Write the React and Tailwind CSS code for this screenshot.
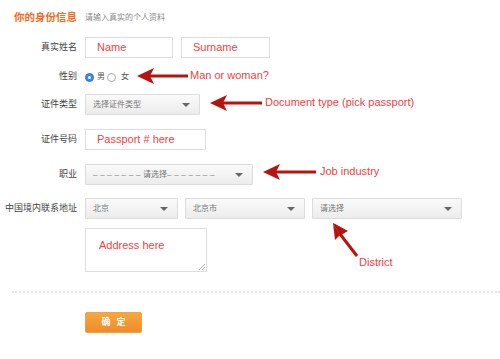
import React from "react";

const CJK = "font-['Liberation_Sans','Noto_Sans_CJK_SC',sans-serif]";
const ANN = "font-['Liberation_Sans',sans-serif] text-[11px] text-[#f24141] leading-none";

function Label({ children }) {
    return (
        <div className={`w-[77px] shrink-0 text-right text-[9px] text-[#444] ${CJK}`}>{children}</div>
    );
}

function Select({ text, className }) {
    return (
        <div className={`h-[21px] flex items-center justify-between pl-[7px] pr-[9px] border border-[#dcdcdc] bg-[linear-gradient(#fafafa,#ececec)] rounded-[1px] overflow-hidden ${className}`}>
            <span className={`text-[8px] text-[#777] whitespace-nowrap ${CJK}`}>{text}</span>
            <svg className="shrink-0" width="8" height="4" viewBox="0 0 8 4"><path d="M0 0h8L4 4z" fill="#666" /></svg>
        </div>
    );
}

function Input({ text, className }) {
    return (
        <div className={`h-[21px] flex items-center pl-[11px] border border-[#dedede] bg-white ${className}`}>
            <span className={ANN}>{text}</span>
        </div>
    );
}

function Arrow({ className, w }) {
    // left pointing annotation arrow
    return (
        <svg className={className} width={w} height="18" viewBox={`0 0 ${w} 18`}>
            <path d="M0 9 L17 1 L13 9 L17 17 Z" fill="#b5140f" />
            <rect x="13" y="7.5" width={w - 13} height="3" fill="#b5140f" />
        </svg>
    );
}

export default function App() {
    return (
        <div className="relative w-[500px] h-[359px] bg-white overflow-hidden">
            <div className="pt-[8px] flex flex-col">
                {/* Title */}
                <div className="h-[20px] flex items-center pl-[14px] gap-[8px]">
                    <span className={`text-[10.5px] font-bold text-[#f26a1b] ${CJK}`}>你的身份信息</span>
                    <span className={`text-[8px] text-[#888] ${CJK}`}>请输入真实的个人资料</span>
                </div>

                {/* Name */}
                <div className="mt-[9px] flex items-center gap-[8px]">
                    <Label>真实姓名</Label>
                    <Input text="Name" className="w-[88px]" />
                    <Input text="Surname" className="w-[89px]" />
                </div>

                {/* Gender */}
                <div className="mt-[9px] h-[20px] flex items-center gap-[8px]">
                    <Label>性别</Label>
                    <div className={`flex items-center text-[8px] text-[#555] ${CJK}`}>
                        <span className="w-[9px] h-[9px] rounded-full bg-[#3b8be6] border border-[#2f78cc] flex items-center justify-center">
                            <span className="w-[3px] h-[3px] rounded-full bg-white" />
                        </span>
                        <span className="ml-[3px]">男</span>
                        <span className="ml-[2px] w-[9px] h-[9px] rounded-full bg-white border border-[#aaa]" />
                        <span className="ml-[5px]">女</span>
                    </div>
                </div>

                {/* Document type */}
                <div className="mt-[7px] flex items-center gap-[8px]">
                    <Label>证件类型</Label>
                    <Select text="选择证件类型" className="w-[115px]" />
                </div>

                {/* Passport */}
                <div className="mt-[14px] flex items-center gap-[8px]">
                    <Label>证件号码</Label>
                    <Input text="Passport # here" className="w-[121px]" />
                </div>

                {/* Job */}
                <div className="mt-[14px] flex items-center gap-[8px]">
                    <Label>职业</Label>
                    <Select
                        text={<><span className="tracking-[2.7px]">–––––––</span>请选择<span className="tracking-[2.7px]">–––––––</span></>}
                        className="w-[168px]"
                    />
                </div>

                {/* Address */}
                <div className="mt-[13px] flex items-center gap-[8px]">
                    <Label>中国境内联系地址</Label>
                    <Select text="北京" className="w-[93px]" />
                    <Select text="北京市" className="w-[120px] -ml-[1px]" />
                    <Select text="请选择" className="w-[150px] -ml-[1px]" />
                </div>

                <div className="mt-[9px] ml-[85px] w-[122px] h-[44px] relative border border-[#dedede] bg-white pt-[6px] pl-[13px] leading-none">
                    <span className={ANN}>Address here</span>
                    <svg className="absolute right-[1px] bottom-[1px]" width="7" height="7" viewBox="0 0 7 7">
                        <path d="M7 1L1 7M7 4L4 7M7 6.5L6.5 7" stroke="#999" strokeWidth="0.8" />
                    </svg>
                </div>

                <div className="mt-[19px] ml-[12px] border-t-2 border-dotted border-[#e6e6e6]" />

                <div className="mt-[19px] ml-[85px] w-[57px] h-[21px] flex items-center justify-center border border-[#f2a04a] rounded-[2px] bg-[linear-gradient(#f6a83c,#ee8b2a)]">
                    <span className={`text-[9px] font-bold text-white tracking-[6px] pl-[6px] ${CJK}`}>确定</span>
                </div>
            </div>

            {/* Annotations */}
            <Arrow className="absolute left-[137px] top-[67px]" w={51} />
            <span className={`absolute left-[190px] top-[70px] ${ANN}`}>Man or woman?</span>

            <Arrow className="absolute left-[210px] top-[94px]" w={52} />
            <span className={`absolute left-[265px] top-[97px] ${ANN}`}>Document type (pick passport)</span>

            <Arrow className="absolute left-[263px] top-[163px]" w={53} />
            <span className={`absolute left-[320px] top-[166px] ${ANN}`}>Job industry</span>

            <svg className="absolute left-[330px] top-[220px]" width="32" height="40" viewBox="0 0 32 40">
                <path d="M3 3 L18 11 L12 14 Z" fill="#b5140f" />
                <path d="M3 3 L5 20 L10 15 Z" fill="#b5140f" />
                <path d="M3 3 L17 11 L10 16 Z" fill="#b5140f" />
                <path d="M10 14 L27 36" stroke="#b5140f" strokeWidth="3" />
            </svg>
            <span className={`absolute left-[359px] top-[257px] ${ANN}`}>District</span>
        </div>
    );
}
